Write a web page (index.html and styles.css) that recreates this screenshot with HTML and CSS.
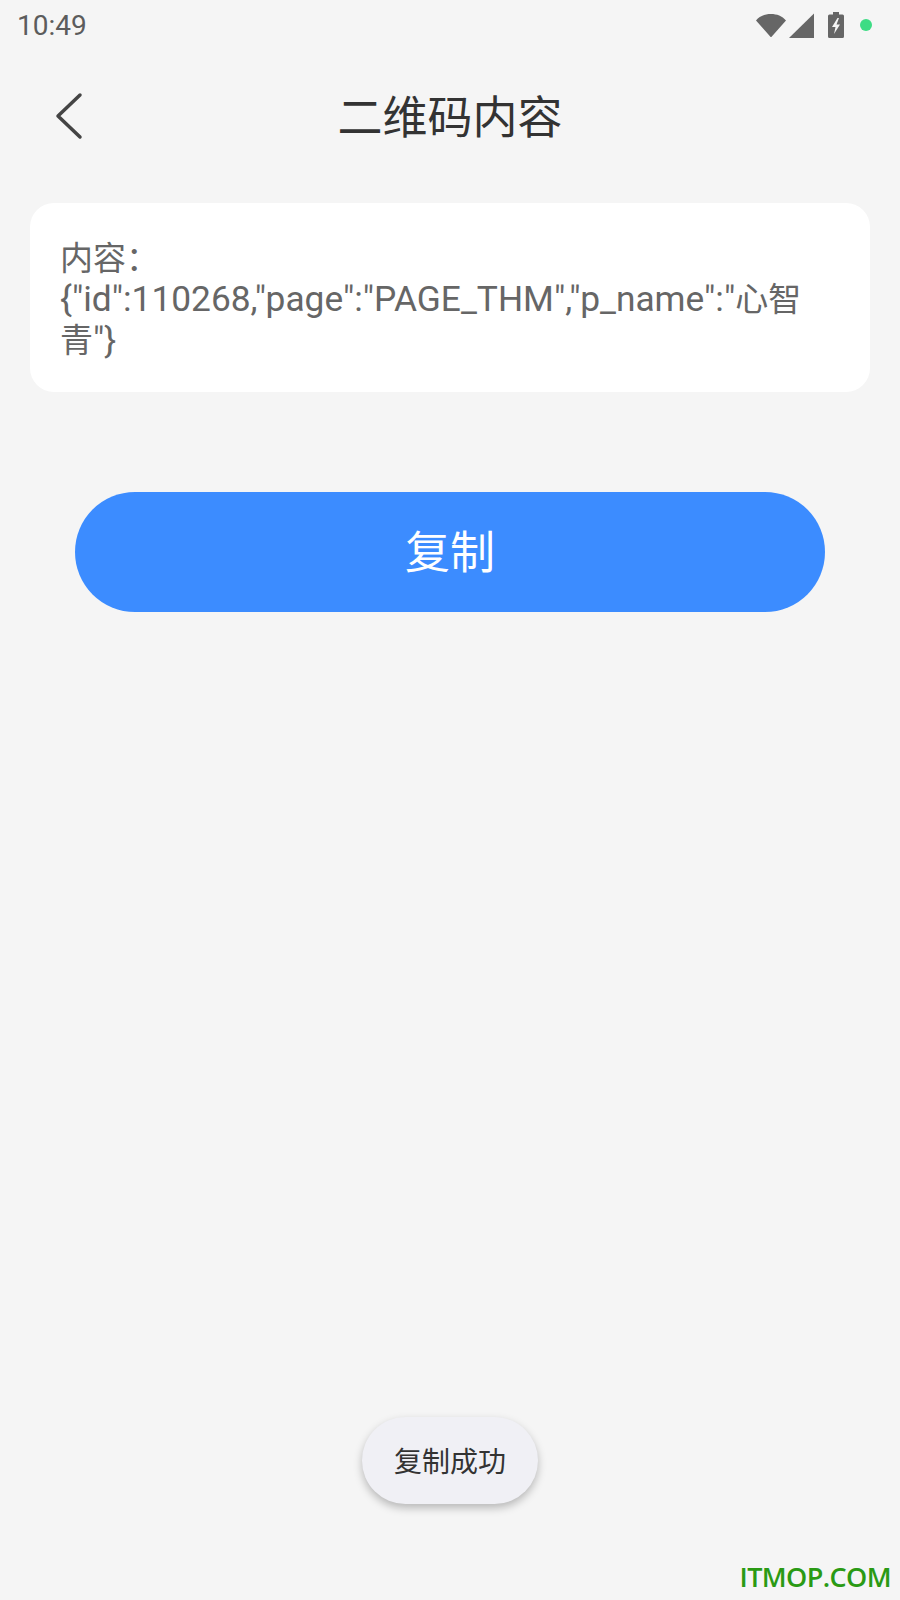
FILE: index.html
```html
<!DOCTYPE html>
<html lang="zh-CN">

<head>
    <meta charset="UTF-8">
    <meta name="viewport" content="width=device-width, initial-scale=1.0">
    <title>二维码内容</title>
    <link rel="stylesheet" href="styles.css">
</head>

<body>
    <div class="container">
        <div class="status-bar">
            <div class="status-time">10:49</div>
            <div class="status-icons">
                <svg class="icon-wifi" width="30" height="26" viewBox="0 0 30 26">
                    <path d="M0 8.5C4 4 9 2 15 2s11 2 15 6.500L15.800 24.500q-.8 1-1.600 0z" fill="#666666" />
                </svg>
                <svg class="icon-signal" width="25" height="25" viewBox="0 0 25 25">
                    <path d="M25 0.500V25H0z" fill="#666666" />
                </svg>
                <svg class="icon-battery" width="16" height="26" viewBox="0 0 16 26">
                    <path d="M5 0h6v2.500h3.500q1.500 0 1.500 1.500v20.500q0 1.500-1.500 1.500h-13q-1.500 0-1.500-1.500V4q0-1.500 1.500-1.500H5z" fill="#666666" />
                    <path d="M9.500 6L4 15h3.500L6 22l6-9.500H8.500L11 6z" fill="#f5f5f5" />
                </svg>
                <div class="status-dot"></div>
            </div>
        </div>

        <div class="title-bar">
            <svg class="back-icon" width="30" height="50" viewBox="0 0 30 50">
                <path d="M25 5L3 26L25 47" fill="none" stroke="#444444" stroke-width="3.500" stroke-linecap="round" stroke-linejoin="round" />
            </svg>
            <div class="title-text">二维码内容</div>
        </div>

        <div class="content-box"><span class="cjk">内容：</span><br>{"id":110268,"page":"PAGE_THM","p_name":"<span class="cjk">心智青</span>"}</div>

        <div class="copy-button">复制</div>
    </div>

    <div class="toast">复制成功</div>
    <div class="watermark">ITMOP.COM</div>
</body>

</html>
```

FILE: styles.css
```css
* {
    margin: 0;
    padding: 0;
    box-sizing: border-box;
}

html,
body {
    width: 900px;
    height: 1600px;
    overflow: hidden;
}

body {
    position: relative;
    background-color: #f5f5f5;
    font-family: Roboto, "Noto Sans CJK SC", sans-serif;
}

.container {
    display: flex;
    flex-direction: column;
}

.status-bar {
    height: 50px;
    padding: 0 28px 0 17px;
    display: flex;
    justify-content: space-between;
    align-items: center;
}

.status-time {
    color: #5c5c5c;
    font-size: 28px;
}

.status-icons {
    display: flex;
    align-items: center;
}

.icon-wifi {
    margin-right: 3px;
}

.icon-signal {
    margin-right: 14px;
}

.icon-battery {
    margin-right: 16px;
}

.status-dot {
    width: 12px;
    height: 12px;
    border-radius: 50%;
    background-color: #3ddc84;
}

.title-bar {
    position: relative;
    height: 118px;
    padding-top: 11px;
    display: flex;
    justify-content: center;
    align-items: center;
}

.back-icon {
    position: absolute;
    left: 55px;
    top: 40px;
}

.title-text {
    color: #333333;
    font-size: 45px;
}

.content-box {
    margin: 35px 30px 0;
    height: 189px;
    padding: 35px 44px 0 30px;
    background-color: #ffffff;
    border-radius: 24px;
    color: #666666;
    font-size: 35.3px;
    line-height: 41px;
}

.cjk {
    font-size: 33px;
}

.copy-button {
    margin: 100px 75px 0;
    height: 120px;
    padding-bottom: 6px;
    border-radius: 60px;
    background-color: #3c8cff;
    color: #ffffff;
    font-size: 45px;
    display: flex;
    justify-content: center;
    align-items: center;
}

.toast {
    position: absolute;
    left: 362px;
    top: 1417px;
    width: 176px;
    height: 87px;
    padding-bottom: 2px;
    border-radius: 44px;
    background-color: #f0f0f5;
    box-shadow: 0 4px 8px rgba(0, 0, 0, 0.25);
    color: #333333;
    font-size: 28px;
    display: flex;
    justify-content: center;
    align-items: center;
}

.watermark {
    position: absolute;
    right: 9px;
    top: 1558px;
    color: #2a9a14;
    font-family: "Open Sans", sans-serif;
    font-size: 27px;
    font-weight: 600;
    letter-spacing: -0.6px;
}
```
